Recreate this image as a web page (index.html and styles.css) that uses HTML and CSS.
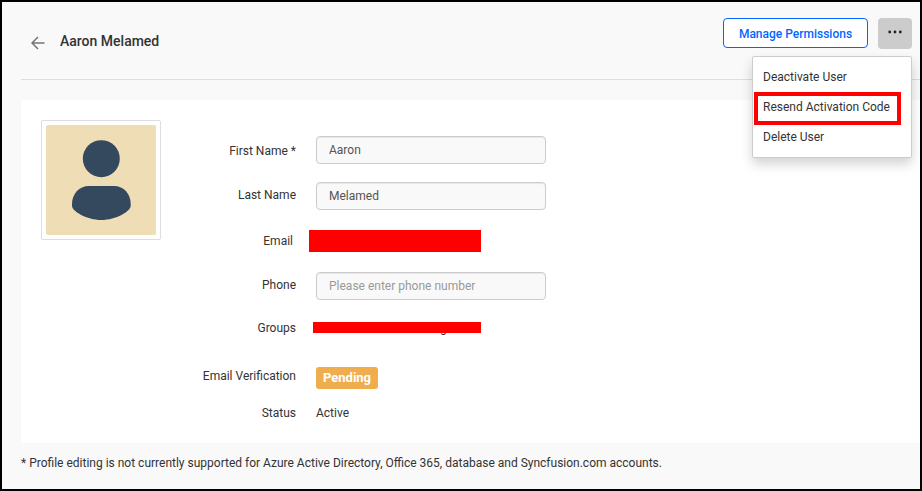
FILE: index.html
```html
<!DOCTYPE html>
<html lang="en">
<head>
<meta charset="utf-8">
<title>Aaron Melamed</title>
<link rel="stylesheet" href="styles.css">
</head>
<body>
<div class="page">
  <header class="header">
    <svg class="back" viewBox="0 0 14 14" width="14" height="14"><path d="M13.5 7H1M7 1L1 7l6 6" fill="none" stroke="#757575" stroke-width="1.5"/></svg>
    <h1 class="title">Aaron Melamed</h1>
    <div class="actions">
      <button class="manage">Manage Permissions</button>
      <button class="more"><svg width="16" height="4" viewBox="0 0 16 4"><g fill="#222"><circle cx="2.7" cy="2" r="1.4"/><circle cx="8" cy="2" r="1.4"/><circle cx="13.3" cy="2" r="1.4"/></g></svg></button>
      <div class="menu">
        <div class="item">Deactivate User</div>
        <div class="item marked">Resend Activation Code</div>
        <div class="item">Delete User</div>
      </div>
    </div>
  </header>
  <main class="card">
    <div class="avatar">
      <svg width="110" height="110" viewBox="0 0 110 110"><rect width="110" height="110" rx="2" fill="#efdeb5"/><circle cx="55.3" cy="33.7" r="18.5" fill="#34495e"/><path d="M43 61H68C78 61 84.700 69 84.700 79V81C84.700 86 70 95 55.300 95S26 86 26 81V79C26 69 33 61 43 61Z" fill="#34495e"/></svg>
    </div>
    <div class="form">
      <div class="row first"><label class="low">First Name *</label><input value="Aaron"></div>
      <div class="row last"><label class="high">Last Name</label><input value="Melamed"></div>
      <div class="row email"><label>Email</label><span class="redacted"></span></div>
      <div class="row phone"><label class="high">Phone</label><input placeholder="Please enter phone number"></div>
      <div class="row groups"><label>Groups</label><span class="group"><span class="tail">g</span><span class="strike"></span></span></div>
      <div class="row verify"><label class="higher">Email Verification</label><span class="badge">Pending</span></div>
      <div class="row status"><label>Status</label><span>Active</span></div>
    </div>
  </main>
  <footer class="note">* Profile editing is not currently supported for Azure Active Directory, Office 365, database and Syncfusion.com accounts.</footer>
</div>
</body>
</html>
```
FILE: styles.css
```css
*, *::after { box-sizing: border-box; }
body { margin: 0; font: 12px/20px Roboto, "Liberation Sans", sans-serif; color: #333; }
.page { height: 491px; border: 2px solid #000; background: #f9f9f9; padding-left: 19px; overflow: hidden; }
.header { display: flex; height: 78px; border-bottom: 1px solid #ddd; padding: 0 8px 0 10px; }
.back { margin-top: 34px; }
.title { margin: 29px 0 0 15px; font-size: 14px; line-height: 20px; font-weight: 500; }
.actions { position: relative; display: flex; gap: 10px; margin-left: auto; padding-top: 16px; }
button { font: 500 12px Roboto, sans-serif; border-radius: 4px; padding: 0; }
.manage { width: 145px; height: 30px; padding-top: 1px; color: #0565ff; background: #fff; border: 1px solid #0565ff; }
.more { width: 34px; height: 31px; border: 0; background: #ccc; }
.more svg { display: block; margin: -4px auto 0; }
.menu { position: absolute; right: 0; top: 54px; width: 160px; height: 102px; padding: 5px 0; background: #fff; border: 1px solid #ccc; border-radius: 2px; box-shadow: 0 6px 12px rgba(0,0,0,.175); }
.item { position: relative; height: 30px; line-height: 30px; padding-left: 10px; white-space: nowrap; }
.marked::after { content: ""; position: absolute; left: 1px; top: 0; width: 147px; height: 33px; border: 4px solid #f00; }
.card { display: flex; height: 343px; margin-top: 20px; background: #fff; }
.avatar { width: 120px; height: 120px; margin: 20px 0 0 20px; padding: 4px; border: 1px solid #ddd; border-radius: 2px; }
.avatar svg { display: block; }
.form { width: 385px; padding-top: 36px; }
.row { display: grid; grid-template-columns: 135px 230px; column-gap: 20px; align-items: center; height: 28px; }
label { text-align: right; }
.low { padding-top: 2px; }
.high { padding-bottom: 2px; }
.higher { margin-top: -4px; }
.last { margin-top: 18px; }
.email { height: 22px; margin-top: 20px; }
.email label { padding-right: 3px; }
.redacted { width: 172px; height: 22px; margin-left: -7px; background: #f00; }
.phone { margin-top: 20px; }
.groups { height: 20px; margin-top: 18px; }
.group { position: relative; height: 20px; }
.tail { position: absolute; left: 124px; top: 0; }
.strike { position: absolute; left: -3px; top: 4px; width: 168px; height: 11px; background: #f00; }
.verify { height: 22px; margin-top: 29px; }
.badge { width: 62px; height: 22px; border-radius: 3px; background: #f0ad4e; color: #fff; font-size: 13px; font-weight: 700; text-align: center; line-height: 22px; }
.status { height: 20px; margin-top: 14px; }
input { width: 230px; height: 28px; padding: 0 12px; border: 1px solid #ccc; border-radius: 4px; background: #f9f9f9; box-shadow: inset 0 1px 1px rgba(0,0,0,.075); font: inherit; color: #555; }
input::placeholder { color: #999; opacity: 1; }
.note { margin-top: 10px; white-space: nowrap; }
```
